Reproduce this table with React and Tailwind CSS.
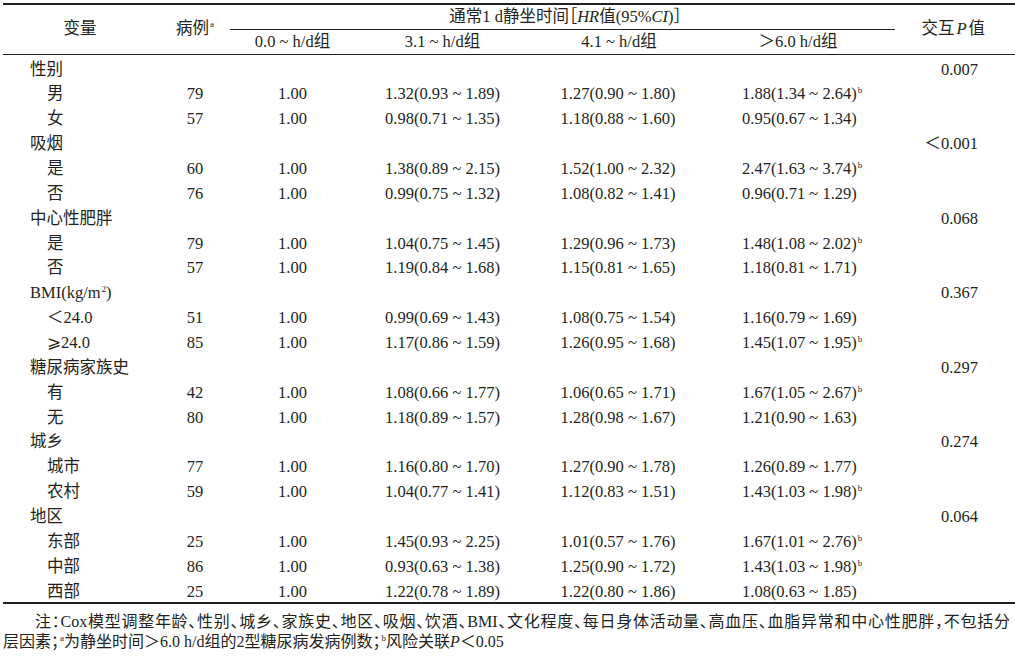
import React from 'react';

const rows = [
  { label: '性别', p: '0.007' },
  { label: '男', n: '79', c: ['1.00', '1.32(0.93 ~ 1.89)', '1.27(0.90 ~ 1.80)', '1.88(1.34 ~ 2.64)'], b: true },
  { label: '女', n: '57', c: ['1.00', '0.98(0.71 ~ 1.35)', '1.18(0.88 ~ 1.60)', '0.95(0.67 ~ 1.34)'] },
  { label: '吸烟', p: '＜0.001' },
  { label: '是', n: '60', c: ['1.00', '1.38(0.89 ~ 2.15)', '1.52(1.00 ~ 2.32)', '2.47(1.63 ~ 3.74)'], b: true },
  { label: '否', n: '76', c: ['1.00', '0.99(0.75 ~ 1.32)', '1.08(0.82 ~ 1.41)', '0.96(0.71 ~ 1.29)'] },
  { label: '中心性肥胖', p: '0.068' },
  { label: '是', n: '79', c: ['1.00', '1.04(0.75 ~ 1.45)', '1.29(0.96 ~ 1.73)', '1.48(1.08 ~ 2.02)'], b: true },
  { label: '否', n: '57', c: ['1.00', '1.19(0.84 ~ 1.68)', '1.15(0.81 ~ 1.65)', '1.18(0.81 ~ 1.71)'] },
  { label: 'BMI', p: '0.367', bmi: true },
  { label: '＜24.0', n: '51', c: ['1.00', '0.99(0.69 ~ 1.43)', '1.08(0.75 ~ 1.54)', '1.16(0.79 ~ 1.69)'] },
  { label: '⩾24.0', n: '85', c: ['1.00', '1.17(0.86 ~ 1.59)', '1.26(0.95 ~ 1.68)', '1.45(1.07 ~ 1.95)'], b: true },
  { label: '糖尿病家族史', p: '0.297' },
  { label: '有', n: '42', c: ['1.00', '1.08(0.66 ~ 1.77)', '1.06(0.65 ~ 1.71)', '1.67(1.05 ~ 2.67)'], b: true },
  { label: '无', n: '80', c: ['1.00', '1.18(0.89 ~ 1.57)', '1.28(0.98 ~ 1.67)', '1.21(0.90 ~ 1.63)'] },
  { label: '城乡', p: '0.274' },
  { label: '城市', n: '77', c: ['1.00', '1.16(0.80 ~ 1.70)', '1.27(0.90 ~ 1.78)', '1.26(0.89 ~ 1.77)'] },
  { label: '农村', n: '59', c: ['1.00', '1.04(0.77 ~ 1.41)', '1.12(0.83 ~ 1.51)', '1.43(1.03 ~ 1.98)'], b: true },
  { label: '地区', p: '0.064' },
  { label: '东部', n: '25', c: ['1.00', '1.45(0.93 ~ 2.25)', '1.01(0.57 ~ 1.76)', '1.67(1.01 ~ 2.76)'], b: true },
  { label: '中部', n: '86', c: ['1.00', '0.93(0.63 ~ 1.38)', '1.25(0.90 ~ 1.72)', '1.43(1.03 ~ 1.98)'], b: true },
  { label: '西部', n: '25', c: ['1.00', '1.22(0.78 ~ 1.89)', '1.22(0.80 ~ 1.86)', '1.08(0.63 ~ 1.85)'] },
];

const cols = 'grid grid-cols-[147px_90px_105px_195px_158px_200px_117px]';

const Sup = ({ children }) => (
  <sup className="text-[9px] relative -top-[6px] ml-[1px]">{children}</sup>
);

const App = () => {
  return (
    <div
      className="w-[1015px] h-[657px] bg-white text-[#231f20] text-[16.5px] pt-[3px] overflow-hidden"
      style={{ fontFamily: '"Liberation Serif", "Noto Sans CJK SC", serif' }}
    >
      <div className="ml-[3px] w-[1012px]">
        {/* Header */}
        <div className={`${cols} grid-rows-[25px_24px] border-t-2 border-b border-[#231f20]`}>
          <div className="col-start-1 row-start-1 row-span-2 flex items-center justify-center pl-[7px]">变量</div>
          <div className="col-start-2 row-start-1 row-span-2 flex items-center justify-center">
            病例<Sup>a</Sup>
          </div>
          <div className="col-start-3 col-span-4 row-start-1 flex flex-col justify-end">
            <div className="-ml-[10px] mr-[3px] border-b border-[#231f20] text-center leading-[24px] pl-[6px] [font-feature-settings:'halt']">
              通常1 d静坐时间［<i>HR</i>值(95%<i>CI</i>)］
            </div>
          </div>
          <div className="col-start-7 row-start-1 row-span-2 flex items-center justify-end pr-[30px]">
            交互<i className="mx-[2px]">P</i>值
          </div>
          <div className="col-start-3 row-start-2 flex items-center justify-center">0.0 ~ h/d组</div>
          <div className="col-start-4 row-start-2 flex items-center justify-center">3.1 ~ h/d组</div>
          <div className="col-start-5 row-start-2 flex items-center justify-center">4.1 ~ h/d组</div>
          <div className="col-start-6 row-start-2 flex items-center justify-center">＞6.0 h/d组</div>
        </div>

        {/* Body */}
        <div className="h-[549px] pt-[2.5px] border-b-2 border-[#231f20]">
          {rows.map((r, i) =>
            r.p ? (
              <div key={i} className={`${cols} h-[24.86px] items-center`}>
                <div className="pl-[27px] whitespace-nowrap">
                  {r.bmi ? (
                    <>
                      BMI(kg/m<Sup>2</Sup>)
                    </>
                  ) : (
                    r.label
                  )}
                </div>
                <div className="col-start-7 text-right pr-[37px]">{r.p}</div>
              </div>
            ) : (
              <div key={i} className={`${cols} h-[24.86px] items-center`}>
                <div className="pl-[44px] whitespace-nowrap">{r.label}</div>
                <div className="text-center">{r.n}</div>
                <div className="text-center">{r.c[0]}</div>
                <div className="text-center">{r.c[1]}</div>
                <div className="text-center pr-[2px]">{r.c[2]}</div>
                <div className="pl-[44px] whitespace-nowrap">
                  {r.c[3]}
                  {r.b && <Sup>b</Sup>}
                </div>
              </div>
            )
          )}
        </div>

        {/* Notes */}
        <div className="pt-[8px] text-[16px] leading-[20px] w-[1007px] [font-feature-settings:'halt']">
          <div className="indent-[32px] text-justify [text-align-last:justify]">
            注：Cox模型调整年龄、性别、城乡、家族史、地区、吸烟、饮酒、BMI、文化程度、每日身体活动量、高血压、血脂异常和中心性肥胖，不包括分
          </div>
          <div>
            层因素；<Sup>a</Sup>为静坐时间＞6.0 h/d组的2型糖尿病发病例数；<Sup>b</Sup>风险关联<i>P</i>＜0.05
          </div>
        </div>
      </div>
    </div>
  );
};

export default App;
